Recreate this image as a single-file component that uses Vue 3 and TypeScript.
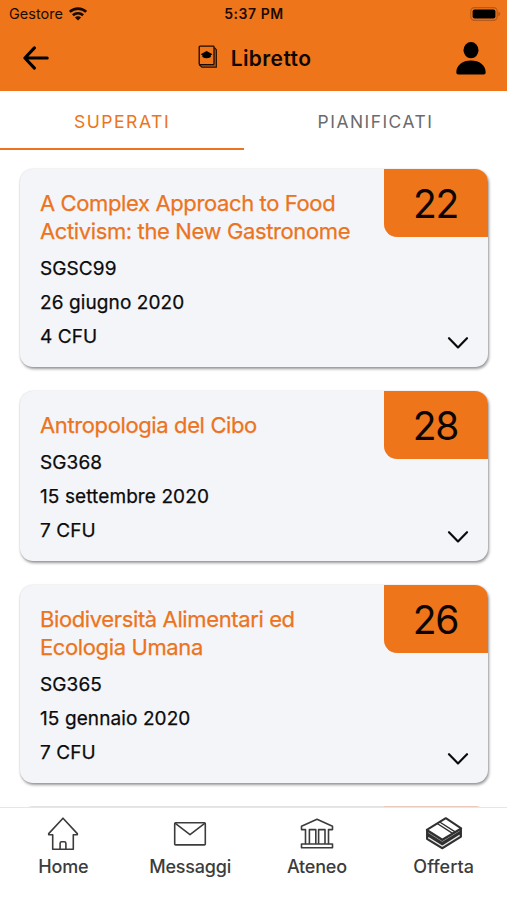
<script setup lang="ts">
import { ref } from 'vue'

interface Exam {
  title: string[]
  code: string
  date: string
  credits: number
  grade: number
}

const activeTab = ref<'superati' | 'pianificati'>('superati')

const exams: Exam[] = [
  { title: ['A Complex Approach to Food', 'Activism: the New Gastronome'], code: 'SGSC99', date: '26 giugno 2020', credits: 4, grade: 22 },
  { title: ['Antropologia del Cibo'], code: 'SG368', date: '15 settembre 2020', credits: 7, grade: 28 },
  { title: ['Biodiversità Alimentari ed', 'Ecologia Umana'], code: 'SG365', date: '15 gennaio 2020', credits: 7, grade: 26 },
]
</script>

<template>
  <div class="screen">
    <header class="header">
      <div class="status">
        <div class="carrier">
          <span class="carrier-name">Gestore</span>
          <svg class="wifi" width="18" height="14" viewBox="0 0 18 14">
            <g fill="none" stroke="#170a00" stroke-width="2.6">
              <path d="M.8 4.9C5.4.5 12.6.5 17.2 4.9" />
              <path d="M3.9 8.3c2.9-2.8 7.3-2.8 10.2 0" />
            </g>
            <path d="M9 13.5 5.9 10.4c1.7-1.5 4.5-1.5 6.2 0z" fill="#170a00" />
          </svg>
        </div>
        <span class="time">5:37 PM</span>
        <svg class="battery" width="31" height="14" viewBox="0 0 31 14">
          <rect x=".8" y=".6" width="26.4" height="12.8" rx="3.6" fill="none" stroke="#b45a1b" stroke-width="1.1" />
          <rect x="2.6" y="2.4" width="22.8" height="9.2" rx="2" fill="#000" />
          <path d="M28.4 4.8c2.4.7 2.4 3.7 0 4.4z" fill="#b45a1b" />
        </svg>
      </div>
      <div class="nav">
        <button class="icon-button" aria-label="Indietro">
          <svg width="26" height="24" viewBox="0 0 26 24" fill="none" stroke="#000" stroke-width="3.1" stroke-linecap="round" stroke-linejoin="round">
            <path d="M11.4 1.9 1.9 12l9.5 10.1M2.2 12h22" />
          </svg>
        </button>
        <div class="heading">
          <svg width="20" height="24" viewBox="0 0 20 24">
            <path d="M16.4 2.6 18.3 4.6V22.2H4.2L1.3 19.7" fill="none" stroke="#1c0b00" stroke-width="1.2" stroke-linejoin="round" />
            <path d="M17 4.2V20.9H3.2" fill="none" stroke="#53290a" stroke-width=".7" />
            <rect x="1.2" y="1.2" width="14.8" height="18.4" rx=".8" fill="#ef751b" stroke="#1c0b00" stroke-width="1.3" />
            <path d="M2.7 9.3 8.6 6l5.9 3.3-1.7 1v1.8q-4.2 2.4-8.4 0v-1.8z" fill="#000" />
          </svg>
          <h1>Libretto</h1>
        </div>
        <button class="icon-button" aria-label="Profilo">
          <svg width="30" height="33" viewBox="0 0 30 33">
            <ellipse cx="15" cy="8.2" rx="7.5" ry="8.1" />
            <path d="M.3 30.4C.3 23.3 6.7 18.6 15 18.6s14.7 4.7 14.7 11.8q0 2-2 2H2.3q-2 0-2-2z" />
          </svg>
        </button>
      </div>
    </header>

    <nav class="tabs">
      <button class="tab" :class="{ active: activeTab === 'superati' }" @click="activeTab = 'superati'">SUPERATI</button>
      <button class="tab last" :class="{ active: activeTab === 'pianificati' }" @click="activeTab = 'pianificati'">PIANIFICATI</button>
    </nav>

    <main class="list">
      <article v-for="exam in exams" :key="exam.code" class="card">
        <div class="details">
          <h2><span v-for="line in exam.title" :key="line">{{ line }}</span></h2>
          <p>{{ exam.code }}</p>
          <p>{{ exam.date }}</p>
          <p>{{ exam.credits }} CFU</p>
        </div>
        <div class="side">
          <div class="grade">{{ exam.grade }}</div>
          <svg class="chevron" width="22" height="14" viewBox="0 0 22 14" fill="none" stroke="#0b0b0c" stroke-width="2.2" stroke-linecap="round" stroke-linejoin="round">
            <path d="m2 2.2 9 9.2 9-9.2" />
          </svg>
        </div>
      </article>
      <div class="next-card"><span></span></div>
    </main>

    <footer class="bottom-bar">
      <a class="item">
        <svg width="32" height="34" viewBox="0 0 32 34" fill="none" stroke="#3c3c3c" stroke-width="1.6" stroke-linejoin="round">
          <path d="M16 1.2 1.7 16.6v1.2h4v14.4h20.6V17.8h4v-1.2z" />
          <path d="M13.1 32.2v-5.8q0-1.6 1.6-1.6h2.6q1.6 0 1.6 1.6v5.8" />
        </svg>
        <span>Home</span>
      </a>
      <a class="item">
        <svg width="34" height="34" viewBox="0 0 34 34" fill="none" stroke="#3c3c3c" stroke-width="1.6" stroke-linejoin="round">
          <rect x="1.7" y="5.7" width="30.6" height="22.2" rx="1" />
          <path d="M2 6.2 17 17.6 32 6.2" />
        </svg>
        <span>Messaggi</span>
      </a>
      <a class="item">
        <svg width="34" height="34" viewBox="0 0 34 34" fill="none" stroke="#3c3c3c" stroke-width="1.6" stroke-linejoin="round">
          <path d="M17 2.3 1.5 9.2v3.4h4V27h-4v3.7h31V27h-4V12.6h4V9.2z" />
          <path d="M5.5 27h23M9.4 12.6h6.4V27H9.4zM18.6 12.6H25V27h-6.4z" />
        </svg>
        <span>Ateneo</span>
      </a>
      <a class="item wide">
        <svg width="38" height="34" viewBox="0 0 38 34" stroke="#303030" stroke-width="1.5" stroke-linejoin="round">
          <path d="M1.8 12.8V22l15.5 9.6L36.2 19.8v-7.6L17.3 23.6z" fill="#303030" />
          <path d="M3.2 20.6l14.1 8.6 17.4-10.8" fill="none" stroke="#e8e8e8" stroke-width="1.3" />
          <path d="M3.2 15.6l14.1 8.8 17.4-10.7" fill="none" stroke="#b9b9b9" stroke-width=".7" />
          <path d="M1.8 12.8 20.8 1.2 36.2 11.4 17.3 22.6z" fill="#fff" stroke-width="2" />
          <path d="M12.2 6.5 27.6 16.4M14.7 5 30.1 14.8" fill="none" stroke-width="1.4" />
        </svg>
        <span>Offerta</span>
      </a>
    </footer>
  </div>
</template>

<style>
body {
  margin: 0;
  background: #fff;
}
</style>

<style scoped>
.screen {
  display: flex;
  flex-direction: column;
  height: 900px;
  overflow: hidden;
  background: #fff;
  color: #0b0b0c;
  font-family: Inter, "Liberation Sans", sans-serif;
}

button {
  border: 0;
  padding: 0;
  background: none;
  font: inherit;
  color: inherit;
}

svg {
  display: block;
}

.header {
  flex: none;
  height: 91px;
  background: #ef751b;
}

.status {
  display: grid;
  grid-template-columns: 1fr auto 1fr;
  align-items: center;
  height: 27px;
  padding: 0 6px 0 9px;
  color: #1c0b00;
}

.carrier {
  display: flex;
  align-items: center;
  gap: 6px;
}

.carrier-name {
  width: 54px;
  font-size: 14.5px;
}

.time {
  margin-right: 2px;
  font-size: 14px;
  font-weight: 600;
  letter-spacing: 0.55px;
}

.battery {
  justify-self: end;
}

.nav {
  display: flex;
  align-items: center;
  justify-content: space-between;
  height: 62px;
  padding: 0 21px 0 23px;
}

.heading {
  display: flex;
  align-items: center;
  gap: 13px;
  margin-left: 4px;
}

.heading svg {
  margin-bottom: 2px;
}

.heading h1 {
  margin: 2px 0 0;
  font-size: 21px;
  font-weight: 600;
  line-height: 30px;
  letter-spacing: 0.4px;
  color: #100600;
}

.tabs {
  flex: none;
  display: flex;
  height: 59px;
}

.tab {
  flex: none;
  box-sizing: border-box;
  width: 244px;
  padding-top: 4px;
  border-bottom: 2.5px solid transparent;
  font-size: 17.6px;
  letter-spacing: 1.5px;
  color: #6b6b6b;
}

.tab.last {
  flex: 1;
  font-size: 17.4px;
}

.tab.active {
  border-bottom-color: #ec7420;
  color: #ec7420;
}

.list {
  display: flex;
  flex: 1;
  flex-direction: column;
  gap: 24px;
  min-height: 0;
  overflow: hidden;
  padding: 19px 19.5px 0 20px;
}

.card {
  flex: none;
  display: flex;
  justify-content: space-between;
  border-radius: 13px;
  background: #f4f5f9;
  box-shadow: 1px 2px 3px rgba(0, 0, 0, 0.4), 0 0 2px rgba(0, 0, 0, 0.14);
}

.details {
  padding: 20px 0 13px 20px;
}

.details h2 {
  margin: 0 0 7px;
  font-size: 22px;
  font-weight: 400;
  line-height: 28px;
  letter-spacing: -0.38px;
  color: #ec7420;
  -webkit-text-stroke: 0.25px currentColor;
}

.details h2 span {
  display: block;
  white-space: nowrap;
}

.details p {
  margin: 0;
  font-size: 19px;
  line-height: 34px;
  letter-spacing: 0.1px;
  -webkit-text-stroke: 0.25px currentColor;
}

.side {
  display: flex;
  flex-direction: column;
  justify-content: space-between;
  width: 104px;
}

.grade {
  height: 68px;
  border-radius: 0 13px 0 13px;
  background: #ef751b;
  font-size: 39px;
  line-height: 69px;
  letter-spacing: -1.3px;
  text-align: center;
  color: #0c0500;
}

.chevron {
  align-self: flex-end;
  margin: 0 18.5px 17px 0;
}

.next-card {
  flex: none;
  display: flex;
  justify-content: flex-end;
  height: 60px;
  margin-top: -1px;
  border-radius: 13px;
  background: #e2e2e4;
}

.next-card span {
  width: 104px;
  border-radius: 0 13px 0 0;
  background: #ecc7bb;
}

.bottom-bar {
  flex: none;
  box-sizing: border-box;
  display: grid;
  grid-template-columns: repeat(4, 1fr);
  height: 93px;
  padding-top: 9px;
  border-top: 1px solid #e6e6e6;
  background: #fff;
}

.item {
  display: flex;
  flex-direction: column;
  align-items: center;
  gap: 4px;
  font-size: 18px;
  font-weight: 500;
  line-height: 24px;
  letter-spacing: -0.2px;
  color: #3c3c3c;
}

.item.wide {
  letter-spacing: 0;
}
</style>
